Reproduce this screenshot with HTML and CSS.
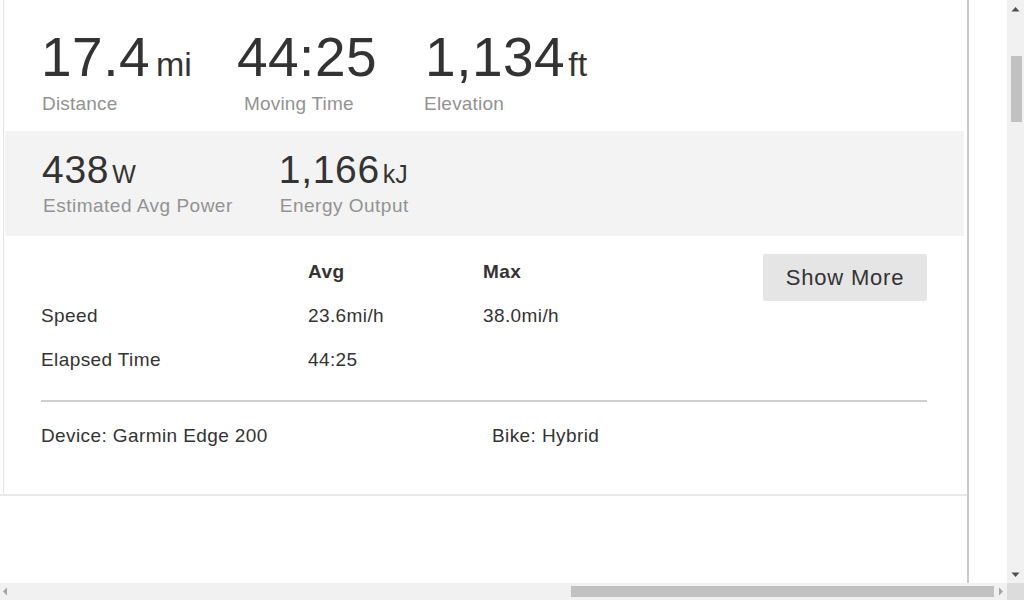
FILE: index.html
```html
<!DOCTYPE html>
<html lang="en">
<head>
<meta charset="utf-8">
<title>Activity</title>
<link rel="stylesheet" href="styles.css">
</head>
<body>
<div class="window">
  <div class="viewport">
    <div class="frame">
      <section class="activity">
        <ul class="stats primary">
          <li class="stat s1">
            <div class="value">17.4<span class="unit">mi</span></div>
            <div class="label">Distance</div>
          </li>
          <li class="stat s2">
            <div class="value">44:25</div>
            <div class="label">Moving Time</div>
          </li>
          <li class="stat s3">
            <div class="value">1,134<span class="unit">ft</span></div>
            <div class="label">Elevation</div>
          </li>
        </ul>
        <ul class="stats secondary">
          <li class="stat">
            <div class="value">438<span class="unit">W</span></div>
            <div class="label">Estimated Avg Power</div>
          </li>
          <li class="stat">
            <div class="value">1,166<span class="unit">kJ</span></div>
            <div class="label">Energy Output</div>
          </li>
        </ul>
        <div class="details">
          <div class="more-stats">
            <table class="stat-table">
              <thead>
                <tr><th class="c1"></th><th class="c2">Avg</th><th class="c3">Max</th></tr>
              </thead>
              <tbody>
                <tr><td>Speed</td><td>23.6mi/h</td><td>38.0mi/h</td></tr>
                <tr><td>Elapsed Time</td><td>44:25</td><td></td></tr>
              </tbody>
            </table>
            <button class="show-more" type="button">Show More</button>
          </div>
          <div class="gear">
            <span class="device">Device: Garmin Edge 200</span>
            <span class="bike">Bike: Hybrid</span>
          </div>
        </div>
      </section>
      <div class="below"></div>
    </div>
  </div>
  <div class="vscroll">
    <div class="sb-btn"><svg width="9" height="6" viewBox="0 0 9 6"><path d="M0.5 5.5 L4.5 1 L8.5 5.5 Z" fill="#505050"/></svg></div>
    <div class="v-track"><div class="v-thumb"></div></div>
    <div class="sb-btn"><svg width="9" height="6" viewBox="0 0 9 6"><path d="M0.5 0.5 L4.5 5 L8.5 0.5 Z" fill="#505050"/></svg></div>
  </div>
  <div class="hscroll">
    <div class="sb-btn h-left"><svg width="6" height="9" viewBox="0 0 6 9"><path d="M5 0.5 L1 4.5 L5 8.5 Z" fill="#a3a3a3"/></svg></div>
    <div class="h-track"><div class="h-thumb"></div></div>
    <div class="sb-btn h-right"><svg width="6" height="9" viewBox="0 0 6 9"><path d="M1 0.5 L5 4.5 L1 8.5 Z" fill="#a3a3a3"/></svg></div>
  </div>
  <div class="corner"></div>
</div>
</body>
</html>
```
FILE: styles.css
```css
* { box-sizing: border-box; }
html, body {
  margin: 0;
  padding: 0;
  background: #fff;
  overflow: hidden;
}
body {
  font-family: "Liberation Sans", Arial, sans-serif;
  color: #333;
}
.window {
  width: 1024px;
  height: 600px;
  display: grid;
  grid-template-columns: 1007px 17px;
  grid-template-rows: 583px 17px;
}
.viewport {
  overflow: hidden;
}
.frame {
  width: 969px;
  height: 583px;
  border-right: 2px solid #c9c9c9;
  display: flex;
  flex-direction: column;
}
.activity {
  height: 494px;
  margin-left: 3px;
  border-left: 1px solid #e3e3e3;
  display: flex;
  flex-direction: column;
}
.below {
  flex: 1;
  border-top: 2px solid #e8e8e8;
}

/* stats */
.stats {
  list-style: none;
  margin: 0;
  display: flex;
  column-gap: 45px;
}
.stat .value {
  color: #333;
  white-space: nowrap;
}
.stat .unit {
  letter-spacing: 0;
}
.stat .label {
  color: #929292;
  font-size: 19px;
  line-height: 22px;
  letter-spacing: 0.2px;
  white-space: nowrap;
}
.primary {
  height: 131px;
  padding: 30px 0 0 37px;
}
.primary .value {
  font-size: 55px;
  line-height: 55px;
  letter-spacing: 0.5px;
  margin-bottom: 8px;
}
.primary .unit {
  font-size: 34px;
  line-height: 34px;
  margin-left: 6px;
}
.primary .s3 .value {
  padding-left: 3px;
}
.primary .s3 .unit {
  margin-left: 3px;
}
.primary .s1 .label {
  padding-left: 1px;
}
.primary .s2 .label {
  padding-left: 7px;
}
.primary .s3 .label {
  padding-left: 2px;
}
.secondary {
  height: 105px;
  margin: 0 3px 0 1px;
  padding: 19px 0 0 37px;
  background: #f3f3f3;
  column-gap: 46px;
}
.secondary .value {
  font-size: 39px;
  line-height: 39px;
  letter-spacing: 0.7px;
  margin-bottom: 6px;
}
.secondary .unit {
  font-size: 25px;
  line-height: 25px;
  margin-left: 3px;
}
.secondary .label {
  padding-left: 1px;
  letter-spacing: 0.5px;
}

/* details */
.details {
  padding: 14px 40px 0 37px;
  font-size: 19px;
  letter-spacing: 0.4px;
  color: #333;
}
.more-stats {
  display: flex;
  align-items: flex-start;
}
.stat-table {
  flex: 1;
  border-collapse: collapse;
  font-size: 19px;
  line-height: 22px;
}
.stat-table th,
.stat-table td {
  padding: 11px 0;
  text-align: left;
  vertical-align: top;
  font-weight: normal;
}
.stat-table th {
  font-weight: bold;
}
.stat-table .c1 { width: 267px; }
.stat-table .c2 { width: 175px; }
.show-more {
  margin-top: 4px;
  width: 164px;
  height: 47px;
  border: 0;
  border-radius: 2px;
  background: #e5e5e5;
  color: #333;
  font-family: "Liberation Sans", Arial, sans-serif;
  font-size: 22px;
  letter-spacing: 0.8px;
  line-height: 47px;
  padding: 0;
}
.gear {
  margin-top: 18px;
  border-top: 2px solid #cfcfcf;
  padding-top: 23px;
  display: flex;
  line-height: 22px;
}
.gear .device { width: 451px; }

/* scrollbars */
.vscroll {
  background: #f1f1f1;
  display: flex;
  flex-direction: column;
}
.sb-btn {
  width: 17px;
  height: 17px;
  display: flex;
  align-items: center;
  justify-content: center;
  flex: none;
}
.v-track {
  flex: 1;
}
.v-thumb {
  margin: 39px 2px 0 4px;
  height: 66px;
  background: #c1c1c1;
}
.hscroll {
  background: #f1f1f1;
  display: flex;
}
.h-left { justify-content: flex-start; padding-left: 2px; }
.h-right { width: 13px; }
.h-track {
  flex: 1;
  display: flex;
  align-items: center;
}
.h-thumb {
  margin-left: 554px;
  flex: 1;
  height: 11px;
  background: #c1c1c1;
}
.corner {
  background: #dcdcdc;
}
```
